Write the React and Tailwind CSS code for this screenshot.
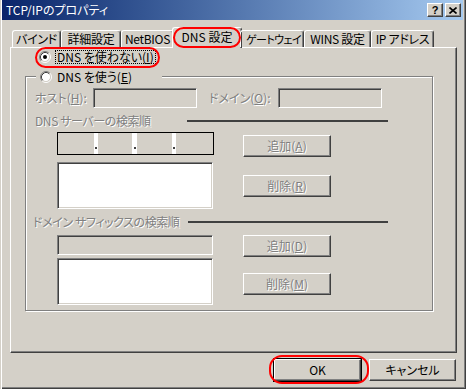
const raised =
  "border border-t-white border-l-white border-r-[#404040] border-b-[#404040] shadow-[inset_-1px_-1px_#808080] bg-[#d4d0c8]";
const sunken =
  "border border-t-[#808080] border-l-[#808080] border-r-white border-b-white shadow-[inset_1px_1px_#404040,inset_-1px_-1px_#d4d0c8]";
const dim = "text-[#808080] [text-shadow:1px_1px_0_#fff]";

function Radio({ checked }) {
  return (
    <svg width="12" height="12" viewBox="0 0 12 12" className="flex-none">
      <circle cx="6" cy="6" r="4.5" fill="#fff" />
      <path d="M2.11 9.89 A5.5 5.5 0 0 1 9.89 2.11" fill="none" stroke="#808080" />
      <path d="M9.89 2.11 A5.5 5.5 0 0 1 2.11 9.89" fill="none" stroke="#fff" />
      <path d="M2.82 9.18 A4.5 4.5 0 0 1 9.18 2.82" fill="none" stroke="#404040" />
      <path d="M9.18 2.82 A4.5 4.5 0 0 1 2.82 9.18" fill="none" stroke="#d4d0c8" />
      {checked && <circle cx="6" cy="6" r="2" fill="#000" />}
    </svg>
  );
}

function Btn({ children }) {
  return (
    <div className={`${raised} w-[88px] h-[22px] flex items-center justify-center ${dim}`}>
      {children}
    </div>
  );
}

function Separator({ label, labelW, lineW, ml }) {
  return (
    <div className="flex items-center h-[14px]" style={{ marginLeft: ml }}>
      <span className={`${dim} whitespace-nowrap tracking-[-0.4px] flex-none`} style={{ width: labelW }}>
        {label}
      </span>
      <div className="h-[2px] bg-[#404040] flex-none" style={{ width: lineW }} />
    </div>
  );
}

const tabs = [
  { label: "バインド", w: 49 },
  { label: "詳細設定", w: 60 },
  { label: "NetBIOS", w: 53 },
  { label: "DNS 設定", w: 66, active: true },
  { label: "ゲートウェイ", w: 64, tight: true },
  { label: "WINS 設定", w: 67 },
  { label: "IP アドレス", w: 63 },
];

export default function App() {
  return (
    <div className="relative w-[466px] h-[389px] overflow-hidden bg-[#d4d0c8] text-black text-[12px] leading-[14px] font-['Noto_Sans_CJK_JP',sans-serif] [font-feature-settings:'palt'] shadow-[inset_1px_0_#d4d0c8,inset_2px_0_#fff,inset_-1px_-1px_#404040,inset_-2px_-2px_#808080]">
      {/* title bar */}
      <div className="ml-[2px] mr-[3px] h-[20px] flex items-center bg-linear-to-r from-[#0a246a] to-[#a6caf0] pl-[4px] pr-[2px]">
        <span className="text-white">TCP/IPのプロパティ</span>
        <div className="ml-auto flex gap-[2px]">
          <div className={`${raised} w-[16px] h-[14px] flex items-center justify-center font-bold text-[11px] leading-[11px] font-['Liberation_Sans',sans-serif]`}>
            ?
          </div>
          <div className={`${raised} w-[16px] h-[14px] flex items-center justify-center`}>
            <svg width="8" height="7" viewBox="0 0 8 7">
              <path d="M0.5 0.5 L7.5 6.5 M7.5 0.5 L0.5 6.5" stroke="#000" strokeWidth="1.6" />
            </svg>
          </div>
        </div>
      </div>

      {/* tabs */}
      <div className="mt-[7px] ml-[12px] h-[20px] flex items-end relative z-10">
        {tabs.map((t) =>
          t.active ? (
            <div
              key={t.label}
              className="-mx-[2px] -mb-[1px] h-[21px] flex-none flex items-center justify-center whitespace-nowrap bg-[#d4d0c8] border-t border-l border-r border-t-white border-l-white border-r-[#404040] shadow-[inset_-1px_0_#808080] rounded-t-[3px] pb-[2px]"
              style={{ width: t.w + 4 }}
            >
              {t.label}
            </div>
          ) : (
            <div
              key={t.label}
              className={`h-[17px] flex-none flex items-center justify-center whitespace-nowrap border-t border-l border-r border-t-white border-l-white border-r-[#404040] shadow-[inset_-1px_0_#808080] rounded-t-[3px] ${
                t.tight ? "text-[11px] tracking-[-0.6px] pl-[3px]" : "tracking-[-0.3px]"
              }`}
              style={{ width: t.w }}
            >
              {t.label}
            </div>
          )
        )}
      </div>

      {/* panel */}
      <div className={`${raised} ml-[10px] w-[447px] h-[306px] flex flex-col`}>
        <div className="ml-[28px] mt-[1px] h-[16px] flex items-center gap-[4px]">
          <Radio checked />
          <span className="border border-dotted border-black px-[1px] leading-[12px]">
            DNS を使わない(<u>I</u>)
          </span>
        </div>

        <div className="ml-[14px] mt-[11px] w-[408px] border border-[#808080] shadow-[inset_1px_1px_#fff,1px_1px_#fff] pb-[5px] flex flex-col">
          <div className="-mt-[8px] ml-[10px] w-[126px] h-[16px] pl-[4px] flex items-center gap-[5px] bg-[#d4d0c8]">
            <Radio />
            <span>
              DNS を使う(<u>E</u>)
            </span>
          </div>

          <div className="mt-[3px] ml-[9px] h-[20px] flex items-center">
            <span className={`${dim} w-[58px]`}>
              ホスト(<u>H</u>):
            </span>
            <div className={`${sunken} w-[104px] h-[20px]`} />
            <span className={`${dim} ml-[12px] w-[69px]`}>
              ドメイン(<u>O</u>):
            </span>
            <div className={`${sunken} w-[104px] h-[20px]`} />
          </div>

          <div className="mt-[6px]">
            <Separator label="DNS サーバーの検索順" labelW={152} lineW={201} ml={9} />
          </div>

          <div className="mt-[4px] flex">
            <div className="ml-[31px] w-[158px] flex flex-col">
              <div className="w-[157px] h-[23px] border border-black flex">
                <div className="w-[36px] bg-[#d4d0c8]" />
                <div className="w-[4px] bg-white flex justify-center pt-[14px]">
                  <div className="w-[2px] h-[2px] bg-[#404040]" />
                </div>
                <div className="w-[34px] bg-[#d4d0c8]" />
                <div className="w-[5px] bg-white flex justify-center pt-[14px]">
                  <div className="w-[2px] h-[2px] bg-[#404040]" />
                </div>
                <div className="w-[35px] bg-[#d4d0c8]" />
                <div className="w-[4px] bg-white flex justify-center pt-[14px]">
                  <div className="w-[2px] h-[2px] bg-[#404040]" />
                </div>
                <div className="w-[37px] bg-[#d4d0c8]" />
              </div>
              <div className={`${sunken} mt-[7px] w-[156px] h-[47px] bg-white`} />
            </div>
            <div className="ml-[28px] pt-[3px] flex flex-col gap-[18px]">
              <Btn>
                追加(<u>A</u>)
              </Btn>
              <Btn>
                削除(<u>R</u>)
              </Btn>
            </div>
          </div>

          <div className="mt-[6px]">
            <Separator label="ドメイン サフィックスの検索順" labelW={155} lineW={200} ml={7} />
          </div>

          <div className="mt-[6px] flex">
            <div className="ml-[31px] w-[156px] flex flex-col">
              <div className={`${sunken} w-[156px] h-[20px]`} />
              <div className={`${sunken} mt-[3px] w-[156px] h-[47px] bg-white`} />
            </div>
            <div className="ml-[30px] flex flex-col gap-[16px]">
              <Btn>
                追加(<u>D</u>)
              </Btn>
              <Btn>
                削除(<u>M</u>)
              </Btn>
            </div>
          </div>
        </div>
      </div>

      {/* dialog buttons */}
      <div className="mt-[5px] pr-[10px] flex justify-end items-start gap-[7px]">
        <div className="w-[89px] h-[24px] border border-black flex">
          <div className={`${raised} flex-1 flex items-center justify-center`}>OK</div>
        </div>
        <div className={`${raised} mt-[1px] w-[87px] h-[22px] flex items-center justify-center`}>
          キャンセル
        </div>
      </div>

      {/* red annotation marks */}
      <div className="absolute left-[173px] top-[27px] w-[68px] h-[21px] border-2 border-[#f00] rounded-[11px] z-20" />
      <div className="absolute left-[35px] top-[47px] w-[125px] h-[21px] border-2 border-[#f00] rounded-[11px] z-20" />
      <div className="absolute left-[269px] top-[355px] w-[100px] h-[29px] border-2 border-[#f00] rounded-[13px] z-20" />
    </div>
  );
}
